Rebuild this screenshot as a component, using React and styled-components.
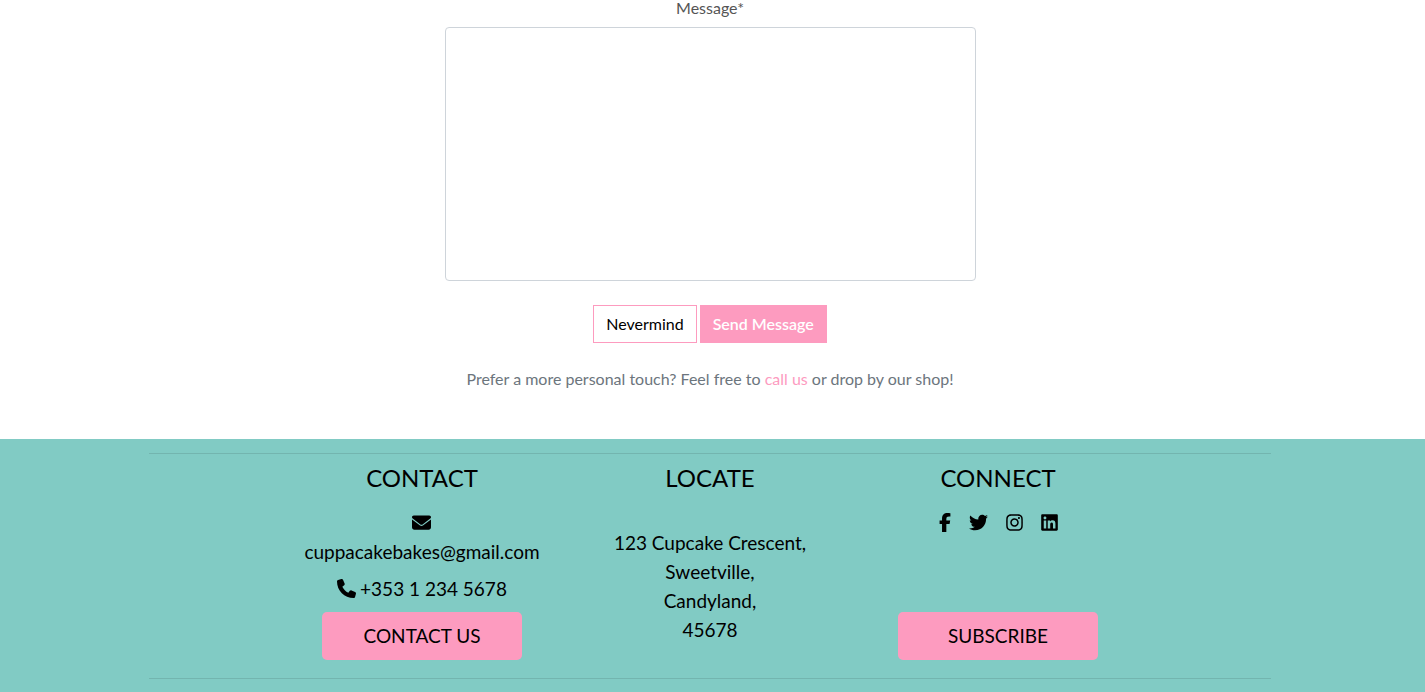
import React from "react";
import styled, { createGlobalStyle, css } from "styled-components";
import {
  FaEnvelope,
  FaPhone,
  FaFacebookF,
  FaTwitter,
  FaInstagram,
  FaLinkedin,
} from "react-icons/fa6";

const GlobalStyle = createGlobalStyle`
  *, *::before, *::after { box-sizing: border-box; }
  body {
    margin: 0;
    background: #fff;
    color: #000;
    font-family: Lato, "Open Sans", sans-serif;
    font-size: 16px;
    line-height: 24px;
  }
`;

const Form = styled.form`
  display: flex;
  flex-direction: column;
  align-items: center;
  padding: 0 5px 48px 0;
  text-align: center;
`;

const Label = styled.label`
  margin-bottom: 12px;
  color: #555;
  line-height: 15px;
`;

const MessageBox = styled.textarea`
  display: block;
  width: 100%;
  max-width: 531px;
  height: 254px;
  padding: 6px 12px;
  border: 1px solid #ced4da;
  border-radius: 4px;
  font: inherit;
  resize: none;
`;

const Actions = styled.div`
  display: flex;
  gap: 3px;
  margin: 24px 0;
`;

const FormButton = styled.button`
  height: 38px;
  padding: 0 12px;
  border: 1px solid #fd9bbf;
  background: #fff;
  color: #000;
  font: inherit;
  cursor: pointer;
  ${({ $primary }) =>
    $primary &&
    css`
      background: #fd9bbf;
      color: #fff;
      font-weight: 600;
    `}
`;

const Note = styled.p`
  margin: 0;
  color: #6c757d;
`;

const NoteLink = styled.a`
  color: #fd9bbf;
  text-decoration: none;
`;

const Footer = styled.footer`
  padding: 14px 5px 13px 0;
  background: #81cbc4;
`;

const FooterInner = styled.div`
  max-width: 1122px;
  margin: 0 auto;
  padding: 9px 0 18px;
  border: solid #73b5af;
  border-width: 1px 0;
`;

const Columns = styled.div`
  display: grid;
  grid-template-columns: repeat(3, minmax(0, 288px));
  justify-content: center;
  min-height: 197px;
`;

const Column = styled.section`
  display: flex;
  flex-direction: column;
  align-items: center;
  font-size: 19px;
  line-height: 29px;
  text-align: center;
`;

const Heading = styled.h2`
  margin: 0 0 16px;
  font-size: 24px;
  font-weight: 400;
  line-height: 29px;
`;

const ContactLink = styled.a`
  display: flex;
  flex-direction: ${({ $stacked }) => ($stacked ? "column" : "row")};
  align-items: center;
  gap: ${({ $stacked }) => ($stacked ? "0" : "4px")};
  margin-bottom: 8px;
  color: inherit;
  text-decoration: none;
`;

const IconLine = styled.span`
  display: flex;
  align-items: center;
  height: 29px;
`;

const Address = styled.address`
  margin-top: 20px;
  font-style: normal;
`;

const SocialLinks = styled.nav`
  display: flex;
  align-items: center;
  gap: 18px;
  height: 29px;
`;

const SocialLink = styled.a`
  display: flex;
  width: ${({ $width }) => $width}px;
  color: inherit;

  svg {
    width: 100%;
    height: 19px;
  }
`;

const FooterButton = styled.button`
  width: 200px;
  height: 48px;
  margin-top: auto;
  padding: 0 0 1px;
  border: 0;
  border-radius: 5px;
  background: #fd9bbf;
  color: #000;
  font: inherit;
  cursor: pointer;
`;

export default function App() {
  return (
    <>
      <GlobalStyle />
      <main>
        <Form onSubmit={(event) => event.preventDefault()}>
          <Label htmlFor="message">Message*</Label>
          <MessageBox id="message" name="message" required />
          <Actions>
            <FormButton type="reset">Nevermind</FormButton>
            <FormButton type="submit" $primary>Send Message</FormButton>
          </Actions>
          <Note>
            Prefer a more personal touch? Feel free to{" "}
            <NoteLink href="tel:+35312345678">call us</NoteLink> or drop by our shop!
          </Note>
        </Form>
      </main>
      <Footer>
        <FooterInner>
          <Columns>
            <Column>
              <Heading>CONTACT</Heading>
              <ContactLink href="mailto:cuppacakebakes@gmail.com" $stacked>
                <IconLine><FaEnvelope size={19} /></IconLine>
                cuppacakebakes@gmail.com
              </ContactLink>
              <ContactLink href="tel:+35312345678">
                <FaPhone size={19} />
                +353 1 234 5678
              </ContactLink>
              <FooterButton type="button">CONTACT US</FooterButton>
            </Column>
            <Column>
              <Heading>LOCATE</Heading>
              <Address>
                123 Cupcake Crescent,<br />
                Sweetville,<br />
                Candyland,<br />
                45678
              </Address>
            </Column>
            <Column>
              <Heading>CONNECT</Heading>
              <SocialLinks aria-label="Social media">
                <SocialLink href="#facebook" aria-label="Facebook" $width={12}><FaFacebookF /></SocialLink>
                <SocialLink href="#twitter" aria-label="Twitter" $width={19}><FaTwitter /></SocialLink>
                <SocialLink href="#instagram" aria-label="Instagram" $width={17}><FaInstagram /></SocialLink>
                <SocialLink href="#linkedin" aria-label="LinkedIn" $width={17}><FaLinkedin /></SocialLink>
              </SocialLinks>
              <FooterButton type="button">SUBSCRIBE</FooterButton>
            </Column>
          </Columns>
        </FooterInner>
      </Footer>
    </>
  );
}
